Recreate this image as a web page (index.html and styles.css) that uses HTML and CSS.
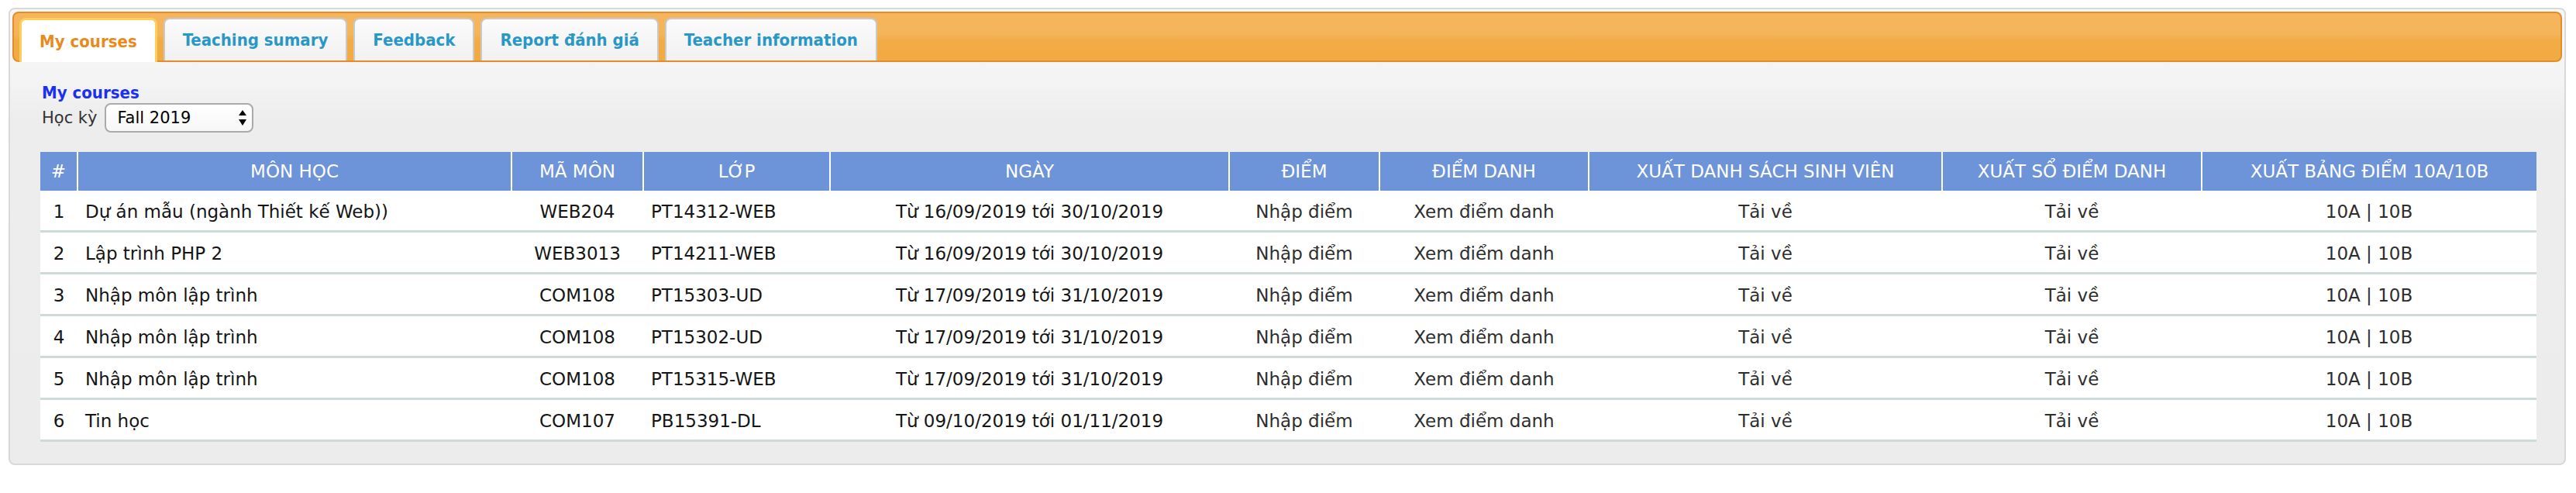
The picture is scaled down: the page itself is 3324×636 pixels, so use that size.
FILE: index.html
```html
<!DOCTYPE html>
<html lang="vi">
<head>
<meta charset="utf-8">
<title>My courses</title>
<link rel="stylesheet" href="styles.css">
</head>
<body>
<div class="panel">
  <div class="tabbar">
    <ul class="tabs">
      <li class="tab active">My courses</li>
      <li class="tab">Teaching sumary</li>
      <li class="tab">Feedback</li>
      <li class="tab">Report đánh giá</li>
      <li class="tab">Teacher information</li>
    </ul>
  </div>
  <div class="content">
    <a class="title" href="#">My courses</a>
    <div class="term">
      <span class="term-label">Học kỳ</span>
      <span class="select-wrap">
        <select class="select"><option>Fall 2019</option></select>
        <svg class="select-arrows" width="12" height="22" viewBox="0 0 12 22"><path d="M6 1 L11 8 L1 8 Z M1 13 L11 13 L6 21 Z" fill="#000"/></svg>
      </span>
    </div>
    <table class="grid">
      <colgroup>
        <col style="width:48px"><col style="width:560px"><col style="width:170px"><col style="width:241px"><col style="width:515px"><col style="width:194px"><col style="width:270px"><col style="width:456px"><col style="width:335px"><col style="width:432px">
      </colgroup>
      <thead>
        <tr><th>#</th><th>MÔN HỌC</th><th>MÃ MÔN</th><th>LỚP</th><th>NGÀY</th><th>ĐIỂM</th><th>ĐIỂM DANH</th><th>XUẤT DANH SÁCH SINH VIÊN</th><th>XUẤT SỔ ĐIỂM DANH</th><th>XUẤT BẢNG ĐIỂM 10A/10B</th></tr>
      </thead>
      <tbody>
        <tr><td>1</td><td class="left">Dự án mẫu (ngành Thiết kế Web))</td><td>WEB204</td><td class="left">PT14312-WEB</td><td>Từ 16/09/2019 tới 30/10/2019</td><td class="link">Nhập điểm</td><td class="link">Xem điểm danh</td><td class="link">Tải về</td><td class="link">Tải về</td><td class="link">10A | 10B</td></tr>
        <tr><td>2</td><td class="left">Lập trình PHP 2</td><td>WEB3013</td><td class="left">PT14211-WEB</td><td>Từ 16/09/2019 tới 30/10/2019</td><td class="link">Nhập điểm</td><td class="link">Xem điểm danh</td><td class="link">Tải về</td><td class="link">Tải về</td><td class="link">10A | 10B</td></tr>
        <tr><td>3</td><td class="left">Nhập môn lập trình</td><td>COM108</td><td class="left">PT15303-UD</td><td>Từ 17/09/2019 tới 31/10/2019</td><td class="link">Nhập điểm</td><td class="link">Xem điểm danh</td><td class="link">Tải về</td><td class="link">Tải về</td><td class="link">10A | 10B</td></tr>
        <tr><td>4</td><td class="left">Nhập môn lập trình</td><td>COM108</td><td class="left">PT15302-UD</td><td>Từ 17/09/2019 tới 31/10/2019</td><td class="link">Nhập điểm</td><td class="link">Xem điểm danh</td><td class="link">Tải về</td><td class="link">Tải về</td><td class="link">10A | 10B</td></tr>
        <tr><td>5</td><td class="left">Nhập môn lập trình</td><td>COM108</td><td class="left">PT15315-WEB</td><td>Từ 17/09/2019 tới 31/10/2019</td><td class="link">Nhập điểm</td><td class="link">Xem điểm danh</td><td class="link">Tải về</td><td class="link">Tải về</td><td class="link">10A | 10B</td></tr>
        <tr><td>6</td><td class="left">Tin học</td><td>COM107</td><td class="left">PB15391-DL</td><td>Từ 09/10/2019 tới 01/11/2019</td><td class="link">Nhập điểm</td><td class="link">Xem điểm danh</td><td class="link">Tải về</td><td class="link">Tải về</td><td class="link">10A | 10B</td></tr>
      </tbody>
    </table>
  </div>
</div>
</body>
</html>
```
FILE: styles.css
```css
html, body {
  margin: 0;
  background: #fff;
}
body {
  padding: 10px 13px 0 11px;
  font-family: "DejaVu Sans", Verdana, sans-serif;
  color: #1a1a1a;
}
.panel {
  box-sizing: border-box;
  width: 3300px;
  height: 590px;
  border: 2px solid #d9d9d9;
  border-radius: 8px;
  padding: 3px;
  background: linear-gradient(#f7f7f7 0px, #f4f4f4 90px, #ededed 140px, #ececec 100%);
  display: flex;
  flex-direction: column;
}
.tabbar {
  box-sizing: border-box;
  height: 65px;
  border: 2px solid #e58b28;
  border-radius: 8px;
  background: linear-gradient(#f5b55d 0%, #f4b45a 45%, #f2ab45 58%, #f2aa42 100%);
  padding: 0 7px;
  display: flex;
  align-items: flex-end;
  margin: 0 0 -3px 0;
}
.tabs {
  list-style: none;
  margin: 0;
  padding: 0;
  display: flex;
  align-items: flex-end;
  gap: 8px;
}
.tab {
  box-sizing: border-box;
  height: 55px;
  padding: 0 23px;
  border: 2px solid #c9c9c9;
  border-bottom: none;
  border-radius: 8px 8px 0 0;
  background: linear-gradient(#fbfbfb, #f1f1f1);
  font-family: "DejaVu Sans Condensed", "DejaVu Sans", sans-serif;
  font-stretch: condensed;
  font-weight: bold;
  font-size: 22px;
  color: #2898c8;
  display: flex;
  align-items: center;
}
.tab.active {
  height: 57px;
  margin-bottom: -2px;
  border-color: #fbcf5a;
  border-width: 3px;
  border-bottom: none;
  background: #fff;
  color: #e98a1d;
  position: relative;
}
.content {
  padding: 30px 39px 0 36px;
}
.title {
  display: block;
  font-family: "DejaVu Sans Condensed", "DejaVu Sans", sans-serif;
  font-stretch: condensed;
  font-weight: bold;
  font-size: 22px;
  line-height: 26px;
  color: #1b30f0;
  text-decoration: none;
  padding-left: 2px;
}
.term {
  display: flex;
  align-items: center;
  gap: 10px;
  height: 38px;
  padding-left: 2px;
  margin-bottom: 25px;
}
.term-label {
  font-size: 21px;
  color: #333;
}
.select-wrap {
  position: relative;
  display: inline-block;
}
.select {
  appearance: none;
  -webkit-appearance: none;
  box-sizing: border-box;
  width: 192px;
  height: 38px;
  border: 2px solid #aaa;
  border-radius: 8px;
  background: linear-gradient(#fff, #f7f7f7);
  font-family: "DejaVu Sans", sans-serif;
  font-size: 21px;
  color: #000;
  padding: 0 0 0 14px;
  margin: 0;
}
.select-arrows {
  position: absolute;
  right: 8px;
  top: 8px;
  pointer-events: none;
}
.grid {
  width: 100%;
  table-layout: fixed;
  border-collapse: collapse;
  font-size: 23px;
}
.grid th {
  height: 50px;
  padding: 0;
  background: #6d93d9;
  color: #fff;
  font-weight: normal;
  text-align: center;
  border-left: 2px solid #fff;
  white-space: nowrap;
}
.grid th:first-child {
  border-left: none;
}
.grid td {
  height: 49px;
  padding: 2px 0 0 0;
  background: #fff;
  text-align: center;
  border-bottom: 3px solid #cfdadb;
  color: #151515;
  white-space: nowrap;
}
.grid td.left {
  text-align: left;
  padding-left: 10px;
}
.grid td.link {
  color: #2e2e2e;
}
```
